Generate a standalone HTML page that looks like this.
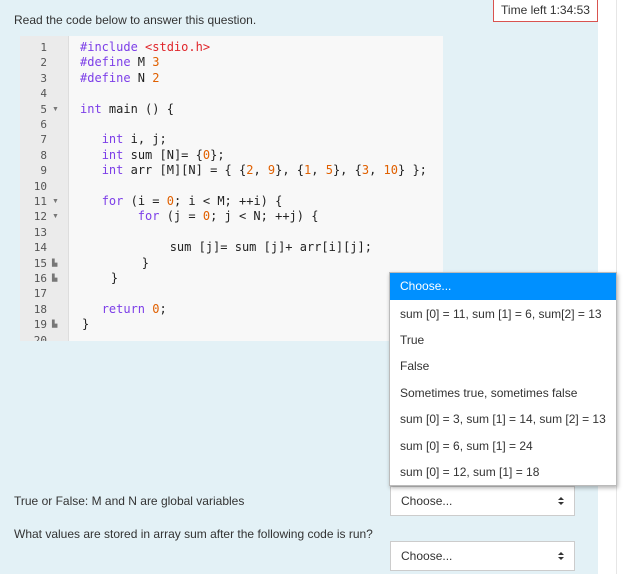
<!DOCTYPE html>
<html><head><meta charset="utf-8"><style>
*{margin:0;padding:0;box-sizing:border-box}
body{width:627px;height:574px;background:#fff;position:relative;overflow:hidden;font-family:"Liberation Sans",sans-serif;font-size:12px;color:#333}
.panel{position:absolute;left:0;top:0;width:598px;height:574px;background:#e3f1f6}
.vline{position:absolute;left:616px;top:0;width:1px;height:574px;background:#e6e6e6}
.timer{position:absolute;left:493px;top:0;width:105px;height:22px;background:#fff;border:1px solid #d9534f;border-top:none;font-size:12px;line-height:20px;text-align:center;color:#333}
.t{position:absolute;white-space:nowrap}
.code{position:absolute;left:20px;top:36px;width:423px;height:305px;background:#f8f8f8;overflow:hidden}
.gut{position:absolute;left:0;top:0;width:49px;height:305px;background:#ebebeb;border-right:1px solid #ddd}
.ln{position:absolute;font-family:"DejaVu Sans Mono",monospace;font-size:11px;color:#555;width:27px;text-align:right;height:15.4px;line-height:15.4px}
.ar{position:absolute;left:32px;font-size:7px;color:#777;line-height:15.4px}
.cl{position:absolute;left:60px;font-family:"DejaVu Sans Mono",monospace;font-size:12px;line-height:15.4px;white-space:pre;color:#222}
.k{color:#7c3ee8}.n{color:#e06000}.s{color:#e0262b}
.dd{position:absolute;left:389px;top:272px;width:228px;height:214px;background:#fff;border:1px solid #bbb;box-shadow:1px 2px 4px rgba(0,0,0,.3)}
.dh{height:27px;background:#0090ff;color:#fff;padding-left:10px;line-height:27px}
.di{position:absolute;left:10px;white-space:nowrap}
.sel{position:absolute;left:390px;width:185px;height:30px;background:#fff;border:1px solid #ccc;padding-left:10px;line-height:28px}
.sel:after{content:"";position:absolute;right:10px;top:10px;border:3px solid transparent;border-bottom:3px solid #333;border-top:none}
.sel:before{content:"";position:absolute;right:10px;top:15px;border:3px solid transparent;border-top:3px solid #333;border-bottom:none}
</style></head><body>
<div class="panel"></div><div class="vline"></div>
<div class="timer">Time left 1:34:53</div>
<div class="t" style="left:14px;top:13px">Read the code below to answer this question.</div>
<div class="code"><div class="gut"></div>
<div class="ln" style="top:4px">1</div><div class="ln" style="top:19.4px">2</div><div class="ln" style="top:34.8px">3</div><div class="ln" style="top:50.2px">4</div><div class="ln" style="top:65.6px">5</div><div class="ln" style="top:81px">6</div><div class="ln" style="top:96.4px">7</div><div class="ln" style="top:111.8px">8</div><div class="ln" style="top:127.2px">9</div><div class="ln" style="top:142.6px">10</div><div class="ln" style="top:158px">11</div><div class="ln" style="top:173.4px">12</div><div class="ln" style="top:188.8px">13</div><div class="ln" style="top:204.2px">14</div><div class="ln" style="top:219.6px">15</div><div class="ln" style="top:235px">16</div><div class="ln" style="top:250.4px">17</div><div class="ln" style="top:265.8px">18</div><div class="ln" style="top:281.2px">19</div><div class="ln" style="top:296.6px">20</div>
<div class="ar" style="top:65.6px">▼</div><div class="ar" style="top:158px">▼</div><div class="ar" style="top:173.4px">▼</div><div class="ar" style="top:219.6px">▙</div><div class="ar" style="top:235px">▙</div><div class="ar" style="top:281.2px">▙</div>
<div class="cl" style="top:4px"><span class="k">#include</span> <span class="s">&lt;stdio.h&gt;</span></div>
<div class="cl" style="top:19.4px"><span class="k">#define</span> M <span class="n">3</span></div>
<div class="cl" style="top:34.8px"><span class="k">#define</span> N <span class="n">2</span></div>
<div class="cl" style="top:65.6px"><span class="k">int</span> main () {</div>
<div class="cl" style="top:96.4px">   <span class="k">int</span> i, j;</div>
<div class="cl" style="top:111.8px">   <span class="k">int</span> sum [N]= {<span class="n">0</span>};</div>
<div class="cl" style="top:127.2px">   <span class="k">int</span> arr [M][N] = { {<span class="n">2</span>, <span class="n">9</span>}, {<span class="n">1</span>, <span class="n">5</span>}, {<span class="n">3</span>, <span class="n">10</span>} };</div>
<div class="cl" style="top:158px">   <span class="k">for</span> (i = <span class="n">0</span>; i &lt; M; ++i) {</div>
<div class="cl" style="top:173.4px">        <span class="k">for</span> (j = <span class="n">0</span>; j &lt; N; ++j) {</div>
<div class="cl" style="top:204.2px;left:63px">            sum [j]= sum [j]+ arr[i][j];</div>
<div class="cl" style="top:219.6px;left:64px">        }</div>
<div class="cl" style="top:235px;left:62px">    }</div>
<div class="cl" style="top:265.8px">   <span class="k">return</span> <span class="n">0</span>;</div>
<div class="cl" style="top:281.2px;left:62px">}</div>
</div>
<div class="t" style="left:14px;top:494px">True or False: M and N are global variables</div>
<div class="t" style="left:14px;top:527px">What values are stored in array sum after the following code is run?</div>
<div class="sel" style="top:486px">Choose...</div>
<div class="sel" style="top:541px">Choose...</div>
<div class="dd"><div class="dh">Choose...</div>
<div class="di" style="top:34px">sum [0] = 11, sum [1] = 6, sum[2] = 13</div>
<div class="di" style="top:60px">True</div>
<div class="di" style="top:86px">False</div>
<div class="di" style="top:113px">Sometimes true, sometimes false</div>
<div class="di" style="top:139px">sum [0] = 3, sum [1] = 14, sum [2] = 13</div>
<div class="di" style="top:166px">sum [0] = 6, sum [1] = 24</div>
<div class="di" style="top:192px">sum [0] = 12, sum [1] = 18</div>
</div>
</body></html>
